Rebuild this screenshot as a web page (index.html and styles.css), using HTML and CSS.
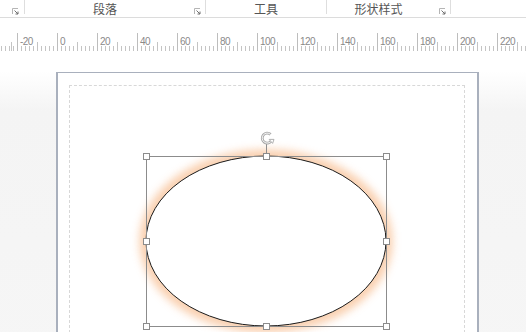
FILE: index.html
```html
<!DOCTYPE html>
<html lang="zh-CN">
<head>
  <meta charset="UTF-8">
  <title>形状样式</title>
  <link rel="stylesheet" href="styles.css">
</head>
<body>
  <!-- 功能区分组标题 -->
  <div class="ribbon">
    <div class="group group-first">
      <span class="launcher"><svg width="7" height="7" viewBox="0 0 7 7"><path d="M0.5 6V0.5H6" fill="none" stroke="#b5b5b5"/><path d="M2.5 2.5L6 6M6 3.5V6H3.5" fill="none" stroke="#6f6f6f"/></svg></span>
      <span class="sep"></span>
    </div>
    <div class="group group-para">
      <span class="title">段落</span>
      <span class="launcher"><svg width="7" height="7" viewBox="0 0 7 7"><path d="M0.5 6V0.5H6" fill="none" stroke="#b5b5b5"/><path d="M2.5 2.5L6 6M6 3.5V6H3.5" fill="none" stroke="#6f6f6f"/></svg></span>
      <span class="sep"></span>
    </div>
    <div class="group group-tools">
      <span class="title">工具</span>
      <span class="sep"></span>
    </div>
    <div class="group group-style">
      <span class="title">形状样式</span>
      <span class="launcher"><svg width="7" height="7" viewBox="0 0 7 7"><path d="M0.5 6V0.5H6" fill="none" stroke="#b5b5b5"/><path d="M2.5 2.5L6 6M6 3.5V6H3.5" fill="none" stroke="#6f6f6f"/></svg></span>
      <span class="sep"></span>
    </div>
  </div>

  <!-- 标尺 -->
  <div class="ruler">
    <div class="marks">
      <span class="mark">-20</span>
      <span class="mark">0</span>
      <span class="mark">20</span>
      <span class="mark">40</span>
      <span class="mark">60</span>
      <span class="mark">80</span>
      <span class="mark">100</span>
      <span class="mark">120</span>
      <span class="mark">140</span>
      <span class="mark">160</span>
      <span class="mark">180</span>
      <span class="mark">200</span>
      <span class="mark">220</span>
    </div>
  </div>

  <!-- 绘图页面 -->
  <div class="workspace">
    <div class="page">
      <div class="margin-guide"></div>
      <svg class="shape" width="420" height="260" viewBox="0 0 420 260">
        <defs>
          <filter id="glow" x="-20%" y="-20%" width="140%" height="140%">
            <feGaussianBlur stdDeviation="4"/>
          </filter>
        </defs>
        <ellipse cx="209" cy="168" rx="120" ry="85" fill="none" stroke="#f8c39a" stroke-width="13" filter="url(#glow)" opacity="0.8"/>
        <ellipse cx="209" cy="168" rx="120" ry="85" fill="#fff" stroke="#1a1a1a" stroke-width="1"/>
        <rect x="89.5" y="83.5" width="240" height="170" fill="none" stroke="#8c8c8c" stroke-width="1"/>
        <line x1="209.5" y1="71" x2="209.5" y2="83" stroke="#8c8c8c"/>
        <path d="M213.6 61.4A5 5 0 1 0 214.3 68" fill="none" stroke="#a8a8a8" stroke-width="2.8"/>
        <path d="M213.6 61.4A5 5 0 1 0 214.3 68" fill="none" stroke="#fff" stroke-width="0.9"/>
        <path d="M212.2 66.4L217 66.4L215.6 70.4Z" fill="#fff" stroke="#a8a8a8" stroke-width="0.9"/>
        <g fill="#fff" stroke="#8c8c8c" stroke-width="1">
          <rect x="86.5" y="80.5" width="6" height="6"/>
          <rect x="206.5" y="80.5" width="6" height="6"/>
          <rect x="326.5" y="80.5" width="6" height="6"/>
          <rect x="86.5" y="165.5" width="6" height="6"/>
          <rect x="326.5" y="165.5" width="6" height="6"/>
          <rect x="86.5" y="250.5" width="6" height="6"/>
          <rect x="206.5" y="250.5" width="6" height="6"/>
          <rect x="326.5" y="250.5" width="6" height="6"/>
        </g>
      </svg>
    </div>
  </div>
</body>
</html>
```

FILE: styles.css
```css
body {
  margin: 0;
  width: 526px;
  height: 332px;
  overflow: hidden;
  font-family: "Noto Sans CJK SC", "Liberation Sans", sans-serif;
  background: #fff;
}

.ribbon {
  display: flex;
  height: 17px;
  border-bottom: 1px solid #dcdcdc;
  background: #fff;
}

.group {
  display: flex;
  align-items: center;
  height: 17px;
}

.group .title {
  flex: 1;
  text-align: center;
  font-size: 12px;
  line-height: 17px;
  color: #555;
}

.group .sep {
  align-self: flex-start;
  width: 1px;
  height: 14px;
  background: #dedede;
}

.launcher {
  display: flex;
  width: 7px;
  height: 7px;
  margin-top: 5px;
}

.group-first {
  width: 25px;
  padding-left: 12px;
  box-sizing: border-box;
}

.group-first .launcher {
  margin-right: 5px;
}

.group-para {
  width: 181px;
}

.group-para .launcher {
  margin: 5px 4px 0 9px;
}

.group-tools {
  width: 121px;
}

.group-style {
  width: 124px;
}

.group-style .launcher {
  margin: 5px 4px 0 9px;
}

.ruler {
  margin-top: 12px;
  height: 21px;
  background-image:
    repeating-linear-gradient(to right, #c4c4c4 0 1px, transparent 1px 20px),
    repeating-linear-gradient(to right, #c4c4c4 0 1px, transparent 1px 4px);
  background-size: 100% 9px, 100% 5px;
  background-position: 17px 100%, 1px 100%;
  background-repeat: repeat-x;
  overflow: hidden;
}

.marks {
  display: flex;
  margin-left: 17px;
  height: 21px;
}

.mark {
  flex: none;
  width: 40px;
  box-sizing: border-box;
  height: 18px;
  margin-top: 3px;
  padding: 4px 0 0 2px;
  border-left: 1px solid #bdbdbd;
  font-family: "Liberation Sans", sans-serif;
  font-size: 10px;
  line-height: 10px;
  letter-spacing: -0.6px;
  color: #8a8a8a;
}

.workspace {
  height: 300px;
  padding: 21px 0 0 56px;
  background: linear-gradient(#fff 0, #fff 20px, #f4f4f4 60px, #f6f6f6 100%);
}

.page {
  position: relative;
  width: 419px;
  height: 300px;
  background: #fff;
  border: 1px solid #a9b0bd;
  border-width: 1px 2px 0 2px;
}

.margin-guide {
  position: absolute;
  left: 11px;
  top: 12px;
  right: 12px;
  bottom: 0;
  border: 1px dashed #d8d8d8;
  border-bottom: none;
}

.shape {
  position: absolute;
  left: -1px;
  top: 0;
}
```
